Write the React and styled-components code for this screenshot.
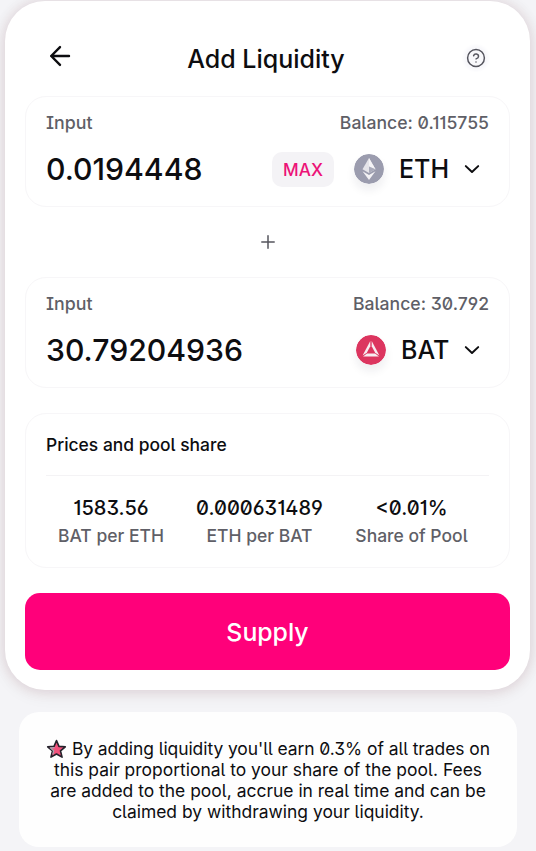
import React from "react";
import styled, { createGlobalStyle } from "styled-components";

const GlobalStyle = createGlobalStyle`
  * { box-sizing: border-box; }
  body {
    margin: 0;
    background: #f4f4f7;
    color: #0d0d10;
    font-family: Inter, "Liberation Sans", sans-serif;
    font-feature-settings: "ss01", "ss02", "cv01", "cv03", "cv09";
  }
`;

const Page = styled.main`
  width: 536px;
  height: 851px;
  padding: 1px 6px 0 5px;
  overflow: hidden;
`;

const Card = styled.section`
  width: 525px;
  height: 689px;
  padding: 0 20px 20px;
  display: flex;
  flex-direction: column;
  border-radius: 40px;
  background: #fff;
  box-shadow: 0 0 14px rgba(90, 15, 25, 0.12), 0 4px 18px rgba(90, 15, 25, 0.07);
`;

const Header = styled.header`
  height: 95px;
  padding: 18px 23px 0 22px;
  display: grid;
  grid-template-columns: 26px 1fr 22px;
  align-items: start;
`;

const Title = styled.h1`
  margin: 25px 0 0;
  padding-right: 6px;
  text-align: center;
  font-size: 25px;
  line-height: 30px;
  font-weight: 500;
  font-feature-settings: normal;
`;

const BackIcon = styled.svg`
  width: 26px;
  height: 26px;
  margin-top: 24px;
`;

const HelpIcon = styled.svg`
  width: 22px;
  height: 22px;
  margin-top: 28px;
  border-radius: 50%;
  background: #f8f8fb;
  box-shadow: 0 0 3px 2px #f9f9fc;
`;

const Panel = styled.section`
  width: 485px;
  height: 111px;
  flex: none;
  padding: 15px 20px 0;
  border: 1px solid #f7f6f8;
  border-radius: 21px;
`;

const Row = styled.div`
  display: flex;
  align-items: center;
  justify-content: space-between;
`;

const Label = styled.span`
  font-size: ${(p) => p.$size || "17.8px"};
  line-height: 22px;
  font-weight: 450;
  color: #5f5f67;
`;

const AmountRow = styled(Row)`
  height: 40px;
  margin-top: 15px;
`;

const Amount = styled.span`
  flex: 1;
  font-size: 30.2px;
  line-height: 38px;
  font-weight: 500;
  font-feature-settings: normal;
`;

const MaxButton = styled.button`
  width: 62px;
  height: 35px;
  margin-right: 20px;
  padding: 0;
  border: 0;
  border-radius: 10px;
  background: #f4f3f6;
  color: #ec1378;
  font: 550 17.2px/35px Inter, "Liberation Sans", sans-serif;
`;

const Token = styled.div`
  display: flex;
  align-items: center;
  padding-right: 8px;
`;

const Coin = styled.svg`
  width: 30px;
  height: 30px;
  border-radius: 50%;
  box-shadow: 0 6px 10px rgba(30, 30, 60, 0.075);
`;

const Symbol = styled.span`
  width: ${(p) => p.$width};
  margin: 0 14px 0 15px;
  font-size: 25px;
  line-height: 32px;
  font-weight: 500;
  font-feature-settings: normal;
`;

const Chevron = styled.svg`
  width: 18px;
  height: 12px;
`;

const Joiner = styled.div`
  height: 70px;
  flex: none;
  display: grid;
  place-items: center;
`;

const SharePanel = styled(Panel)`
  height: 155px;
  margin-top: 25px;
  padding-top: 20px;
`;

const ShareTitle = styled.h2`
  height: 42px;
  margin: 0;
  border-bottom: 1px solid #f4f3f5;
  font-size: 17.45px;
  line-height: 22px;
  font-weight: 500;
`;

const Stats = styled.div`
  display: grid;
  grid-template-columns: 130px 167px 137px;
  padding-top: 20px;
`;

const Stat = styled.div`
  display: flex;
  flex-direction: column;
  align-items: center;
  gap: 5px;
`;

const StatValue = styled.strong`
  font-size: 20px;
  line-height: 24px;
  font-weight: 500;
`;

const SupplyButton = styled.button`
  width: 485px;
  height: 77px;
  flex: none;
  margin-top: 25px;
  padding: 1px 0 0;
  border: 0;
  border-radius: 15px;
  background: #ff007a;
  color: #fff;
  font: 500 24.8px/30px Inter, "Liberation Sans", sans-serif;
`;

const Note = styled.aside`
  width: 498px;
  height: 135px;
  margin: 22px 0 0 14px;
  padding: 26px 0 0;
  border-radius: 20px;
  background: #fefefe;
  text-align: center;
  font-size: 17.45px;
  line-height: 21px;
  white-space: nowrap;
`;

const NoteLine = styled.div`
  height: 21px;
  letter-spacing: ${(p) => p.$tracking || "normal"};
`;

const Star = styled.svg`
  width: 21px;
  height: 20px;
  vertical-align: -4px;
`;

const ChevronDown = () => (
  <Chevron viewBox="0 0 18 12" fill="none" stroke="#0d0d10" strokeWidth="2" strokeLinecap="round" strokeLinejoin="round">
    <path d="M2.8 3.1 9 9l6.2-5.9" />
  </Chevron>
);

const EthCoin = () => (
  <Coin viewBox="0 0 30 30">
    <circle cx="15" cy="15" r="15" fill="#9b9cae" />
    <path d="m15 4-6.5 11.3L15 19l6.5-3.7z" fill="#e5e4e9" />
    <path d="m15 4 6.5 11.3L15 12.4z" fill="#f5f4f6" />
    <path d="m15 12.4 6.5 2.9L15 19z" fill="#aaabba" />
    <path d="m8.5 17.3 6.5 8.8 6.5-8.8L15 21z" fill="#f3f1f4" />
  </Coin>
);

const BatCoin = () => (
  <Coin viewBox="0 0 30 30">
    <circle cx="15" cy="15" r="15" fill="#dc355f" />
    <path d="M14.3 6v5.3l-3.5 6.4-4.2 2.7z" fill="#f7edf2" />
    <path d="M15.7 6v5.3l3.5 6.4 4.2 2.7z" fill="#f7edf2" />
    <path d="M11 18.6h8l4 3H7z" fill="#f7edf2" />
  </Coin>
);

const tokens = {
  ETH: { Icon: EthCoin, width: "50px" },
  BAT: { Icon: BatCoin, width: "48px" },
};

function TokenInput({ amount, balance, symbol, max }) {
  const { Icon, width } = tokens[symbol];
  return (
    <Panel>
      <Row>
        <Label>Input</Label>
        <Label $size="17.6px">Balance: {balance}</Label>
      </Row>
      <AmountRow>
        <Amount>{amount}</Amount>
        {max && <MaxButton>MAX</MaxButton>}
        <Token>
          <Icon />
          <Symbol $width={width}>{symbol}</Symbol>
          <ChevronDown />
        </Token>
      </AmountRow>
    </Panel>
  );
}

const stats = [
  ["1583.56", "BAT per ETH"],
  ["0.000631489", "ETH per BAT"],
  ["<0.01%", "Share of Pool"],
];

export default function App() {
  return (
    <>
      <GlobalStyle />
      <Page>
        <Card>
          <Header>
            <BackIcon viewBox="0 0 26 26" fill="none" stroke="#0d0d10" strokeWidth="2.4" strokeLinecap="round" strokeLinejoin="round">
              <path d="M22 13H4.2M13 4.1 4.2 13l8.8 8.9" />
            </BackIcon>
            <Title>Add Liquidity</Title>
            <HelpIcon viewBox="0 0 22 22" fill="none" stroke="#56565f" strokeWidth="1.5" strokeLinecap="round">
              <circle cx="11" cy="11" r="8.4" />
              <path d="M8.6 8.8a2.5 2.5 0 0 1 4.9.8c0 1.6-2.4 2.3-2.4 2.3M11 15v.1" />
            </HelpIcon>
          </Header>
          <TokenInput amount="0.0194448" balance="0.115755" symbol="ETH" max />
          <Joiner>
            <svg width="16" height="16" viewBox="0 0 16 16" stroke="#55555e" strokeWidth="1.5" strokeLinecap="round">
              <path d="M8 1.8v12.4M1.8 8h12.4" />
            </svg>
          </Joiner>
          <TokenInput amount="30.79204936" balance="30.792" symbol="BAT" />
          <SharePanel>
            <ShareTitle>Prices and pool share</ShareTitle>
            <Stats>
              {stats.map(([value, label]) => (
                <Stat key={label}>
                  <StatValue>{value}</StatValue>
                  <Label $size="17.5px">{label}</Label>
                </Stat>
              ))}
            </Stats>
          </SharePanel>
          <SupplyButton>Supply</SupplyButton>
        </Card>
        <Note>
          <NoteLine $tracking="-0.06px">
            <Star viewBox="0 0 22 20" strokeLinejoin="round">
              <path d="m11 1.2 2.6 6 6.6.5-5 4.3 1.6 6.500-5.800-3.300-5.800 3.300L6.800 12l-5-4.300 6.600-.5z" fill="#f2527c" stroke="#25222b" strokeWidth="1.700" />
              <path d="m9 8.500-4.500.3 3.500 3-.8 3.800" fill="none" stroke="#aaa5b0" strokeWidth="1.3" />
            </Star>{" "}
            By adding liquidity you'll earn 0.3% of all trades on
          </NoteLine>
          <NoteLine>this pair proportional to your share of the pool. Fees</NoteLine>
          <NoteLine>are added to the pool, accrue in real time and can be</NoteLine>
          <NoteLine>claimed by withdrawing your liquidity.</NoteLine>
        </Note>
      </Page>
    </>
  );
}
